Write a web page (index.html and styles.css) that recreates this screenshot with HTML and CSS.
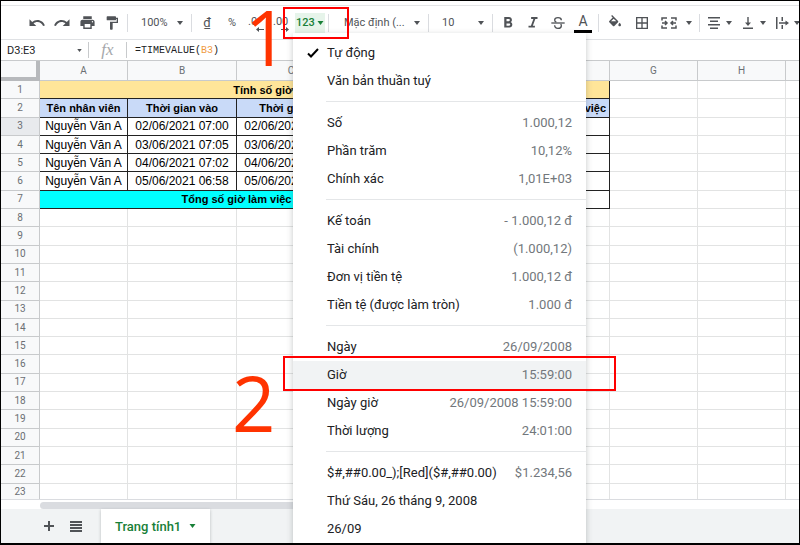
FILE: index.html
```html
<!DOCTYPE html>
<html lang="vi">
<head>
    <meta charset="UTF-8">
    <meta name="viewport" content="width=device-width, initial-scale=1.0">
    <title>Trang tính</title>
    <link rel="stylesheet" href="styles.css">
</head>
<body>
    <div class="app">
        <div class="toolbar">
            <button class="tool" aria-label="Hoàn tác"><svg width="18" height="18" viewBox="0 0 24 24"><path d="M12.5 8c-2.65 0-5.05.99-6.9 2.6L2 7v9h9l-3.62-3.62c1.39-1.16 3.16-1.88 5.12-1.88 3.54 0 6.55 2.31 7.6 5.5l2.37-.78C21.08 11.03 17.15 8 12.5 8z"/></svg></button>
            <button class="tool" aria-label="Làm lại"><svg width="18" height="18" viewBox="0 0 24 24"><path d="M18.4 10.6C16.55 8.99 14.15 8 11.5 8c-4.65 0-8.58 3.03-9.96 7.22L3.9 16c1.05-3.19 4.05-5.5 7.6-5.5 1.95 0 3.73.72 5.12 1.88L13 16h9V7l-3.6 3.6z"/></svg></button>
            <button class="tool" aria-label="In"><svg width="17" height="17" viewBox="0 0 24 24"><path d="M19 8H5c-1.66 0-3 1.34-3 3v6h4v4h12v-4h4v-6c0-1.66-1.34-3-3-3zm-3 11H8v-5h8v5zm3-7c-.55 0-1-.45-1-1s.45-1 1-1 1 .45 1 1-.45 1-1 1zm-1-9H6v4h12V3z"/></svg></button>
            <button class="tool" aria-label="Sao chép định dạng"><svg width="16" height="16" viewBox="0 0 24 24"><path d="M18 4V3c0-.55-.45-1-1-1H5c-.55 0-1 .45-1 1v4c0 .55.45 1 1 1h12c.55 0 1-.45 1-1V6h1v4H9v11c0 .55.45 1 1 1h2c.55 0 1-.45 1-1v-9h8V4h-3z"/></svg></button>
            <span class="divider"></span>
            <select class="pick pick-small" aria-label="Thu phóng"><option>100%</option></select>
            <span class="divider"></span>
            <button class="tool currency">₫</button>
            <button class="tool">%</button>
            <button class="tool decimal" aria-label="Giảm số thập phân"><span>.0</span><svg width="8" height="5" viewBox="0 0 8 5"><path d="M3 0v2h5v1H3v2L0 2.500z"/></svg></button>
            <button class="tool decimal" aria-label="Tăng số thập phân"><span>.00</span><svg width="8" height="5" viewBox="0 0 8 5"><path d="M5 0v2H0v1h5v2l3-2.500z"/></svg></button>
            <div class="format">
                <button class="format-button">123<svg width="7" height="4" viewBox="0 0 6 4"><path d="M0 0h6L3 4z"/></svg></button>
                <div class="menu" role="menu">
                    <button class="menu-item checked" role="menuitem"><svg class="check" width="12" height="10" viewBox="0 0 12 10"><path d="M1 5.500l3 3L11 1"/></svg><span>Tự động</span></button>
                    <button class="menu-item" role="menuitem"><span>Văn bản thuần tuý</span></button>
                    <hr>
                    <button class="menu-item" role="menuitem"><span>Số</span><span class="sample">1.000,12</span></button>
                    <button class="menu-item" role="menuitem"><span>Phần trăm</span><span class="sample">10,12%</span></button>
                    <button class="menu-item" role="menuitem"><span>Chính xác</span><span class="sample">1,01E+03</span></button>
                    <hr>
                    <button class="menu-item" role="menuitem"><span>Kế toán</span><span class="sample">- 1.000,12 đ</span></button>
                    <button class="menu-item" role="menuitem"><span>Tài chính</span><span class="sample">(1.000,12)</span></button>
                    <button class="menu-item" role="menuitem"><span>Đơn vị tiền tệ</span><span class="sample">1.000,12 đ</span></button>
                    <button class="menu-item" role="menuitem"><span>Tiền tệ (được làm tròn)</span><span class="sample">1.000 đ</span></button>
                    <hr>
                    <button class="menu-item" role="menuitem"><span>Ngày</span><span class="sample">26/09/2008</span></button>
                    <div class="step">
                        <button class="menu-item active" role="menuitem"><span>Giờ</span><span class="sample">15:59:00</span></button>
                        <span class="mark mark-item"></span>
                        <span class="number number-item">2</span>
                    </div>
                    <button class="menu-item" role="menuitem"><span>Ngày giờ</span><span class="sample">26/09/2008 15:59:00</span></button>
                    <button class="menu-item" role="menuitem"><span>Thời lượng</span><span class="sample">24:01:00</span></button>
                    <hr>
                    <button class="menu-item" role="menuitem"><span>$#,##0.00_);[Red]($#,##0.00)</span><span class="sample">$1.234,56</span></button>
                    <button class="menu-item" role="menuitem"><span>Thứ Sáu, 26 tháng 9, 2008</span></button>
                    <button class="menu-item" role="menuitem"><span>26/09</span></button>
                </div>
                <span class="mark mark-button"></span>
                <span class="number number-button">1</span>
            </div>
            <span class="divider"></span>
            <select class="pick pick-font" aria-label="Phông chữ"><option>Mặc định (...</option></select>
            <span class="divider"></span>
            <select class="pick pick-small" aria-label="Cỡ chữ"><option>10</option></select>
            <span class="divider"></span>
            <button class="tool" aria-label="Đậm"><svg width="18" height="18" viewBox="0 0 24 24"><path d="M15.600 10.790c.97-.67 1.650-1.770 1.650-2.790 0-2.260-1.750-4-4-4H7v14h7.040c2.090 0 3.710-1.700 3.710-3.790 0-1.520-.86-2.820-2.150-3.420zM10 6.500h3c.83 0 1.500.67 1.500 1.500s-.67 1.500-1.500 1.500h-3v-3zm3.500 9H10v-3h3.500c.83 0 1.500.67 1.500 1.500s-.67 1.500-1.500 1.500z"/></svg></button>
            <button class="tool" aria-label="Nghiêng"><svg width="18" height="18" viewBox="0 0 24 24"><path d="M9.500 4v2.500h3L9.200 15.500H6V18h8.500v-2.500h-2.700l3.300-9H18V4z"/></svg></button>
            <button class="tool" aria-label="Gạch ngang"><svg width="16" height="16" viewBox="0 0 24 24"><path d="M2 11h20v2H2z"/><path class="line" d="M17 8c0-3-2-4-5-4S7 5.500 7 7.500c0 1.500.8 2.500 2.500 3.200M7 15.500c0 3 2 4.500 5 4.500s5-1.500 5-4c0-1-.3-1.800-1-2.500"/></svg></button>
            <button class="tool text-color">A</button>
            <span class="divider"></span>
            <button class="tool wide" aria-label="Màu nền"><svg width="16" height="16" viewBox="0 0 24 24"><path d="M16.560 8.940L7.620 0 6.210 1.410l2.380 2.380-5.150 5.150c-.59.59-.59 1.540 0 2.120l5.500 5.500c.29.29.68.44 1.060.44s.77-.15 1.060-.44l5.500-5.500c.59-.58.59-1.530 0-2.120zM6 9.500l4-4 4 4zM19 11.500s-2 2.170-2 3.500c0 1.100.9 2 2 2s2-.9 2-2c0-1.330-2-3.500-2-3.500z"/></svg></button>
            <button class="tool wide" aria-label="Đường viền"><svg width="16" height="16" viewBox="0 0 24 24"><path d="M3 3v18h18V3H3zm8 16H5v-6h6v6zm0-8H5V5h6v6zm8 8h-6v-6h6v6zm0-8h-6V5h6v6z"/></svg></button>
            <button class="tool merge" aria-label="Hợp nhất ô"><svg width="16" height="14" viewBox="0 0 16 14"><path class="line thin" d="M1 4.500V2h5M10 2h5v2.500M1 9.500V12h5M10 12h5V9.500M1 7h5M15 7h-5M4 5l2 2-2 2M12 5l-2 2 2 2"/></svg><svg width="6" height="4" viewBox="0 0 6 4"><path d="M0 0h6L3 4z"/></svg></button>
            <span class="divider"></span>
            <button class="tool drop" aria-label="Căn ngang"><svg width="14" height="12" viewBox="0 0 14 12"><path d="M1 0h12v1.500H1zM3 3.500h8V5H3zM1 7h12v1.500H1zM3 10.500h8V12H3z"/></svg><svg width="6" height="4" viewBox="0 0 6 4"><path d="M0 0h6L3 4z"/></svg></button>
            <button class="tool drop" aria-label="Căn dọc"><svg width="14" height="12" viewBox="0 0 14 12"><path d="M2 10.500h10V12H2zM6.300 0h1.400v5.500H10L7 9 4 5.500h2.300z"/></svg><svg width="6" height="4" viewBox="0 0 6 4"><path d="M0 0h6L3 4z"/></svg></button>
            <button class="tool drop" aria-label="Ngắt dòng"><svg width="14" height="12" viewBox="0 0 14 12"><path d="M1 0h1.500v12H1zM6.500 0H8v4H6.500zM6.500 8H8v4H6.500zM4 5.300h6.500V3.500L14 6l-3.500 2.500V6.700H4z"/></svg><svg width="6" height="4" viewBox="0 0 6 4"><path d="M0 0h6L3 4z"/></svg></button>
        </div>

        <div class="formula-bar">
            <input class="cell-name" type="text" value="D3:E3" aria-label="Hộp tên">
            <svg class="arrow" width="5" height="3" viewBox="0 0 6 4"><path d="M0 0h6L3 4z"/></svg>
            <span class="fx">fx</span>
            <div class="formula" role="textbox" contenteditable="true" spellcheck="false">=TIMEVALUE(<span class="ref">B3</span>)</div>
        </div>

        <div class="sheet">
            <table>
                <colgroup>
                    <col class="col-head"><col><col class="col-date"><col class="col-date"><col><col><col><col><col><col>
                </colgroup>
                <thead>
                    <tr><th class="corner"></th><th>A</th><th>B</th><th>C</th><th>D</th><th>E</th><th>F</th><th>G</th><th>H</th><th></th></tr>
                </thead>
                <tbody id="rows">
                    <tr><th>1</th><td class="data title" colspan="6">Tính số giờ làm việc của nhân viên</td><td></td><td></td><td></td></tr>
                    <tr class="names"><th>2</th><td class="data">Tên nhân viên</td><td class="data">Thời gian vào</td><td class="data">Thời gian ra</td><td class="data" colspan="2">Thời gian</td><td class="data">Số giờ làm việc</td><td></td><td></td><td></td></tr>
                    <tr><th class="selected">3</th><td class="data">Nguyễn Văn A</td><td class="data">02/06/2021 07:00</td><td class="data">02/06/2021 17:00</td><td class="data" colspan="2"></td><td class="data"></td><td></td><td></td><td></td></tr>
                    <tr><th>4</th><td class="data">Nguyễn Văn A</td><td class="data">03/06/2021 07:05</td><td class="data">03/06/2021 17:00</td><td class="data" colspan="2"></td><td class="data"></td><td></td><td></td><td></td></tr>
                    <tr><th>5</th><td class="data">Nguyễn Văn A</td><td class="data">04/06/2021 07:02</td><td class="data">04/06/2021 17:00</td><td class="data" colspan="2"></td><td class="data"></td><td></td><td></td><td></td></tr>
                    <tr><th>6</th><td class="data">Nguyễn Văn A</td><td class="data">05/06/2021 06:58</td><td class="data">05/06/2021 17:00</td><td class="data" colspan="2"></td><td class="data"></td><td></td><td></td><td></td></tr>
                    <tr><th>7</th><td class="data total" colspan="4">Tổng số giờ làm việc</td><td class="data" colspan="2"></td><td></td><td></td><td></td></tr>
                </tbody>
            </table>
        </div>

        <div class="scroll"><div class="scroll-thumb"></div></div>

        <div class="tabs">
            <button class="tab-tool" aria-label="Thêm trang tính"><svg width="10" height="10" viewBox="0 0 10 10"><path d="M4 0h2v4h4v2H6v4H4V6H0V4h4z"/></svg></button>
            <button class="tab-tool" aria-label="Tất cả trang tính"><svg width="12" height="11" viewBox="0 0 12 11"><path d="M0 0h12v2H0zM0 3h12v2H0zM0 6h12v2H0zM0 9h12v2H0z"/></svg></button>
            <button class="tab">Trang tính1<svg width="7" height="4" viewBox="0 0 6 4"><path d="M0 0h6L3 4z"/></svg></button>
        </div>
    </div>

    <script>
        // empty rows below the data
        const rows = document.getElementById('rows');
        for (let i = 8; i <= 23; i++) {
            rows.insertAdjacentHTML('beforeend', '<tr><th>' + i + '</th>' + '<td></td>'.repeat(9) + '</tr>');
        }
    </script>
</body>
</html>
```
FILE: styles.css
```css
* {
    box-sizing: border-box;
}
body {
    margin: 0;
    font-family: Roboto, Arial, sans-serif;
    font-size: 12px;
    color: #202124;
}
button, input, select {
    font-family: inherit;
    border: none;
    background: none;
    padding: 0;
    margin: 0;
}
svg {
    fill: #505357;
    flex-shrink: 0;
}
.line {
    fill: none;
    stroke: #505357;
    stroke-width: 2;
}
.thin {
    stroke-width: 1.5;
}
.app {
    height: 100vh;
    display: flex;
    flex-direction: column;
    overflow: hidden;
    background-color: #fff;
    border: 1px solid #000;
    border-bottom-width: 2px;
}

/* toolbar */
.toolbar {
    display: flex;
    align-items: center;
    gap: 1px;
    height: 35px;
    margin-top: 4px;
    padding-left: 24px;
    border-top: 1px solid #e4e5e7;
    border-bottom: 1px solid #dfe1e4;
    flex-shrink: 0;
}
.tool {
    width: 24px;
    height: 20px;
    display: flex;
    align-items: center;
    justify-content: center;
    flex-shrink: 0;
    font-size: 11px;
    color: #505357;
}
.wide {
    width: 26px;
}
.merge {
    width: 40px;
    gap: 9px;
}
.drop {
    width: 33px;
    gap: 5px;
}
.currency {
    font-size: 13px;
}
.decimal {
    flex-direction: column;
    align-items: flex-start;
    font-size: 11px;
    line-height: 10px;
    padding: 3px 0 0 3px;
}
.decimal svg {
    margin-left: 8px;
}
.text-color {
    width: 18px;
    margin: 0 3px;
    font-size: 14px;
    border-bottom: 3px solid #000;
}
.divider {
    width: 1px;
    height: 18px;
    margin: 0 2px;
    background-color: #dadce0;
    flex-shrink: 0;
}
.pick {
    appearance: none;
    height: 20px;
    padding-left: 10px;
    font-size: 11px;
    color: #505357;
    flex-shrink: 0;
    background: url("data:image/svg+xml,%3Csvg xmlns='http://www.w3.org/2000/svg' width='6' height='4'%3E%3Cpath d='M0 0h6L3 4z' fill='%23505357'/%3E%3C/svg%3E") no-repeat right 5px center;
}
.pick-small {
    width: 57px;
}
.pick-font {
    width: 93px;
    padding-left: 12px;
}

/* number format button and its menu */
.format {
    position: relative;
    flex-shrink: 0;
}
.format-button {
    width: 30px;
    height: 20px;
    display: flex;
    align-items: center;
    justify-content: center;
    gap: 2px;
    font-size: 11px;
    font-weight: 500;
    color: #188038;
    background-color: #e6f4ea;
}
.format-button svg, .tab svg {
    fill: #188038;
}
.menu {
    position: absolute;
    top: 100%;
    left: -2px;
    z-index: 2;
    width: 293px;
    padding: 6px 0 20px;
    background-color: #fff;
    box-shadow: 0 2px 6px rgba(60, 64, 67, 0.3);
}
.menu-item {
    display: flex;
    align-items: center;
    justify-content: space-between;
    width: 100%;
    height: 28px;
    padding: 0 14px 0 34px;
    font-size: 13px;
    color: #202124;
    white-space: nowrap;
}
.checked {
    justify-content: flex-start;
    gap: 8px;
    padding-left: 14px;
}
.check path {
    fill: none;
    stroke: #000;
    stroke-width: 2;
}
.active {
    background-color: #f1f3f4;
}
.sample {
    color: #72777c;
}
.menu hr {
    height: 1px;
    margin: 6px 0 7px 33px;
    border: none;
    background-color: #e4e6e8;
}

/* step marks */
.step {
    position: relative;
}
.mark {
    position: absolute;
    z-index: 3;
    border: 2px solid #f00;
    pointer-events: none;
}
.mark-button {
    top: -6px;
    left: -12px;
    width: 66px;
    height: 32px;
}
.mark-item {
    top: -5px;
    left: -10px;
    right: -30px;
    height: 35px;
}
.number {
    position: absolute;
    z-index: 1;
    font-family: "Open Sans", "Noto Sans", sans-serif;
    font-size: 76px;
    font-weight: 500;
    line-height: 76px;
    color: #ff3300;
}
.number-button {
    top: -14px;
    left: -50px;
}
.number-item {
    top: 4px;
    left: -61px;
}

/* formula bar */
.formula-bar {
    display: flex;
    align-items: center;
    height: 21px;
    padding-left: 6px;
    border-bottom: 1px solid #c8cacc;
    flex-shrink: 0;
}
.cell-name {
    width: 70px;
    font-size: 11px;
    color: #202124;
}
.fx {
    width: 39px;
    margin-left: 6px;
    text-align: center;
    font-family: "Liberation Serif", serif;
    font-size: 17px;
    line-height: 16px;
    font-style: italic;
    color: #a5a8ab;
    border-left: 1px solid #c8cacc;
    border-right: 1px solid #c8cacc;
}
.formula {
    flex: 1;
    padding-left: 8px;
    font-family: "Liberation Mono", monospace;
    font-size: 10px;
}
.ref {
    color: #f09a3e;
}

/* grid */
.sheet {
    flex: 1;
    min-height: 0;
    overflow: hidden;
}
table {
    width: 873px;
    height: 441px;
    table-layout: fixed;
    border-spacing: 0;
    font-family: "Liberation Sans", Arial, sans-serif;
    font-size: 12px;
    line-height: 14px;
}
col {
    width: 88px;
}
.col-head {
    width: 39px;
}
.col-date {
    width: 109px;
}
th, td {
    padding: 0;
    text-align: center;
    white-space: nowrap;
    overflow: hidden;
    border-right: 1px solid #e2e3e3;
    border-bottom: 1px solid #e2e3e3;
}
th {
    font-family: Roboto, sans-serif;
    font-size: 10px;
    font-weight: normal;
    color: #6b6f73;
    background-color: #f8f9fa;
    border-color: #c8cacc;
}
thead tr {
    height: 20px;
}
.corner {
    border-right: 4px solid #b7b9bc;
    border-bottom: 4px solid #b7b9bc;
}
.selected {
    background-color: #e8eaed;
}
.data {
    color: #000;
    border-color: #222;
}
.title, .names .data, .total {
    font-size: 11px;
    font-weight: bold;
}
.title {
    background-color: #ffe599;
}
.names .data {
    background-color: #c9daf8;
}
.total {
    background-color: #00ffff;
}

/* bottom */
.scroll {
    height: 10px;
    padding: 2px 0 1px 39px;
    border-top: 1px solid #dadce0;
    flex-shrink: 0;
}
.scroll-thumb {
    width: 68%;
    height: 7px;
    border-radius: 4px;
    background-color: #dadce0;
}
.tabs {
    display: flex;
    height: 34px;
    padding-left: 34px;
    background-color: #f1f3f4;
    flex-shrink: 0;
}
.tab-tool {
    width: 27px;
    display: flex;
    align-items: center;
    justify-content: center;
}
.tab {
    display: flex;
    align-items: center;
    gap: 8px;
    margin-left: 12px;
    padding: 0 14px;
    font-size: 13px;
    font-weight: 500;
    color: #188038;
    background-color: #fff;
    box-shadow: 0 1px 3px rgba(60, 64, 67, 0.3);
}
```
